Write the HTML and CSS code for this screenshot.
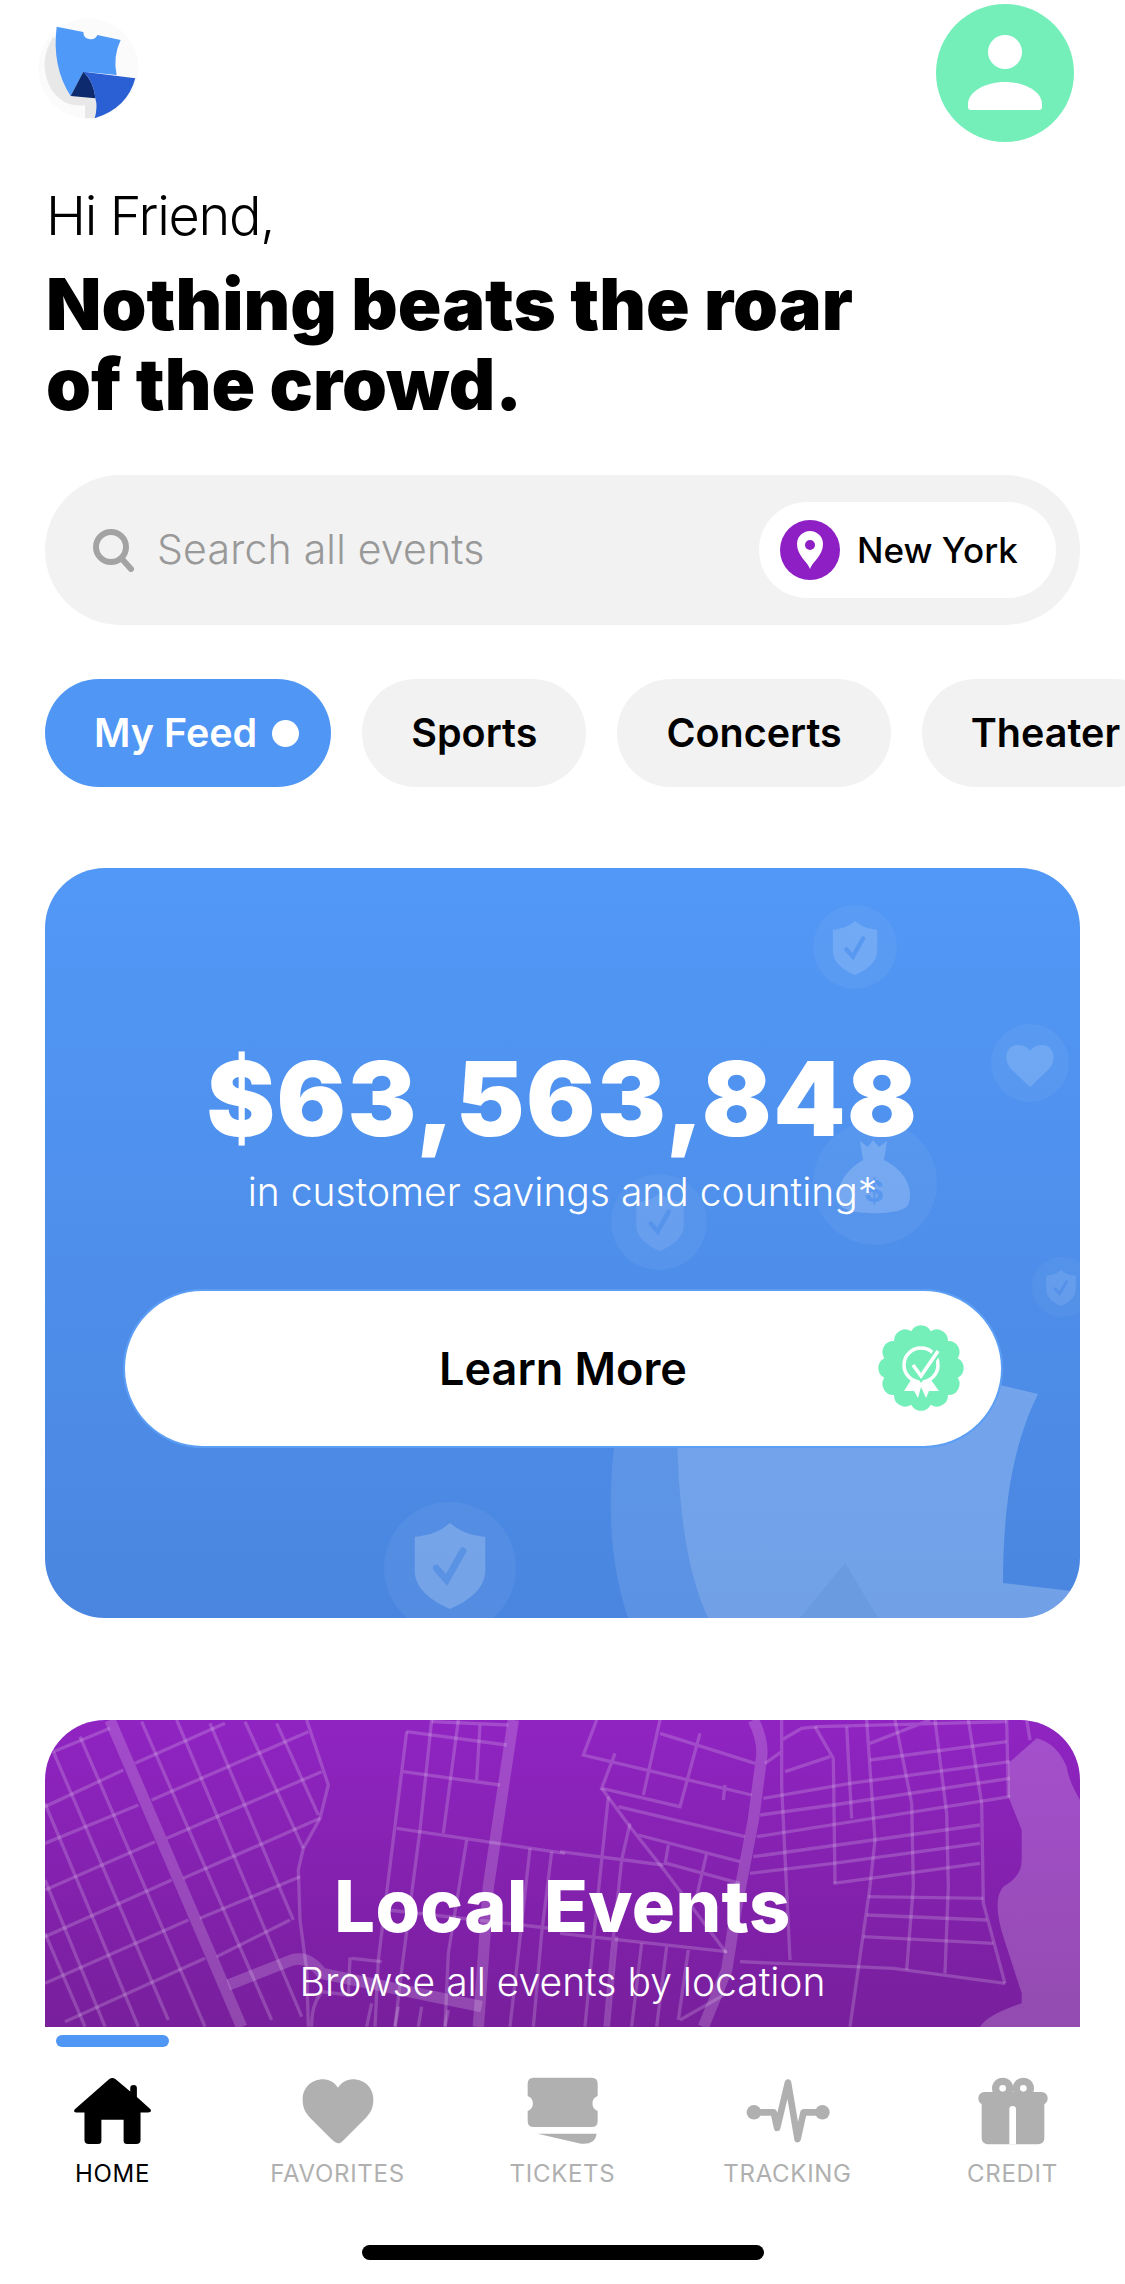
FILE: index.html
```html
<!DOCTYPE html>
<html lang="en">
  <head>
    <meta charset="UTF-8" />
    <meta name="viewport" content="width=device-width, initial-scale=1.0" />
    <title>Home</title>
    <link rel="stylesheet" href="styles.css">
  </head>
  <body>
    <div class="app">
      <main class="main">
        <header class="top-bar">
          <svg class="logo" viewBox="0 0 390 360">
            <circle cx="205" cy="175" r="150" fill="#fbfbfb" />
            <path d="M100,80 Q50,160 95,240 Q135,295 195,285 L195,325 L225,325 L240,240 Z" fill="#e8e8e8" />
            <path d="M110,50 L190,66 A22,22 0 0 0 232,75 L302,90 Q278,140 290,195 L190,185 L152,258 Q95,170 110,50 Z" fill="#4f9af8" />
            <path d="M190,185 L152,258 L226,265 Q222,215 190,185 Z" fill="#0d2a6e" />
            <path d="M190,185 L346,205 Q322,295 224,325 Q234,290 226,265 Q222,215 190,185 Z" fill="#2a60d4" />
          </svg>
          <svg class="avatar" viewBox="936 4 138 138">
            <circle cx="1005" cy="73" r="69" fill="#74efb9" />
            <circle cx="1005" cy="52" r="17" fill="#fff" />
            <path d="M968,104 C968,92 985,82 1005,82 C1025,82 1042,92 1042,104 V107 Q1042,110 1039,110 H971 Q968,110 968,107 Z" fill="#fff" />
          </svg>
        </header>

        <p class="greeting">Hi Friend,</p>
        <h1 class="headline">Nothing beats the roar<br>of the crowd.</h1>

        <div class="search">
          <svg class="search-icon" viewBox="0 0 42 44">
            <circle cx="18" cy="19" r="15" fill="none" stroke="#a3a3a3" stroke-width="6" />
            <path d="M29,31 L38,41" stroke="#a3a3a3" stroke-width="6" stroke-linecap="round" />
          </svg>
          <span class="search-text">Search all events</span>
          <div class="location">
            <svg class="pin" viewBox="0 0 60 60">
              <circle cx="30" cy="30" r="30" fill="#8e1fc4" />
              <path d="M30,49 C28,42 17,36 17,24 A13,13 0 0 1 43,24 C43,36 32,42 30,49 Z" fill="#fff" />
              <circle cx="30" cy="25" r="5" fill="#8e1fc4" />
            </svg>
            <span class="location-name">New York</span>
          </div>
        </div>

        <nav class="chips">
          <div class="chip chip-active">My Feed<span class="chip-dot"></span></div>
          <div class="chip">Sports</div>
          <div class="chip">Concerts</div>
          <div class="chip">Theater</div>
        </nav>

        <section class="card savings">
          <svg class="art" viewBox="45 868 1035 750">
            <defs>
              <path id="shield" d="M0,-1 C.3,-.74 .6,-.7 .82,-.68 L.82,.1 C.82,.55 .38,.84 0,1 C-.38,.84 -.82,.55 -.82,.1 L-.82,-.68 C-.6,-.7 -.3,-.74 0,-1 Z" />
              <path id="tick" d="M-.32,.05 L-.08,.32 L.3,-.35" fill="none" stroke-linecap="round" />
            </defs>
            <path d="M625,1380 Q595,1520 628,1618 L708,1618 Q672,1540 678,1380 Z" fill="#fff" opacity=".1" />
            <path d="M678,1380 Q672,1540 708,1618 L1080,1618 L1080,1592 L1003,1583 C1003,1500 1015,1440 1038,1394 L996,1384 Z" fill="#fff" opacity=".22" />
            <path d="M845,1563 L800,1618 L878,1618 Z" fill="#6a9be0" />

            <circle cx="855" cy="947" r="42" fill="#fff" opacity=".05" />
            <use href="#shield" transform="translate(855 948) scale(27)" fill="#fff" opacity=".15" />
            <use href="#tick" transform="translate(855 948) scale(27)" stroke="#4f92ef" stroke-width=".16" opacity=".7" />

            <circle cx="1030" cy="1063" r="39" fill="#fff" opacity=".05" />
            <path d="M1030,1087 L1012,1070 C1002,1060 1006,1045 1018,1045 C1024,1045 1028,1048 1030,1051 C1032,1048 1036,1045 1042,1045 C1054,1045 1058,1060 1048,1070 Z" fill="#fff" opacity=".15" />

            <circle cx="875" cy="1183" r="62" fill="#fff" opacity=".05" />
            <path d="M860,1141 L868,1147 L873,1140 L879,1147 L887,1141 L884,1160 C905,1170 915,1190 908,1205 C903,1216 845,1216 840,1205 C833,1190 845,1170 863,1160 Z" fill="#fff" opacity=".18" />
            <text class="bag-sign" x="874" y="1202">$</text>

            <circle cx="659" cy="1222" r="48" fill="#fff" opacity=".05" />
            <use href="#shield" transform="translate(660 1222) scale(29)" fill="#fff" opacity=".1" />
            <use href="#tick" transform="translate(660 1222) scale(29)" stroke="#4f8fea" stroke-width=".16" opacity=".7" />

            <circle cx="1062" cy="1287" r="30" fill="#fff" opacity=".04" />
            <use href="#shield" transform="translate(1061 1288) scale(18)" fill="#fff" opacity=".1" />
            <use href="#tick" transform="translate(1061 1288) scale(18)" stroke="#4d8ce8" stroke-width=".16" opacity=".7" />

            <circle cx="450" cy="1568" r="66" fill="#fff" opacity=".05" />
            <use href="#shield" transform="translate(450 1566) scale(43)" fill="#fff" opacity=".2" />
            <use href="#tick" transform="translate(450 1566) scale(43)" stroke="#5a92e4" stroke-width=".16" />
          </svg>

          <div class="amount">$63,563,848</div>
          <p class="savings-text">in customer savings and counting*</p>
          <button class="learn-more">
            Learn More
            <svg class="badge" viewBox="-44 -44 88 88">
              <path d="M36.7,9.8 A11,11 0 0 1 26.9,26.9 A11,11 0 0 1 9.8,36.7 A11,11 0 0 1 -9.8,36.7 A11,11 0 0 1 -26.9,26.9 A11,11 0 0 1 -36.7,9.8 A11,11 0 0 1 -36.7,-9.8 A11,11 0 0 1 -26.9,-26.9 A11,11 0 0 1 -9.8,-36.7 A11,11 0 0 1 9.8,-36.7 A11,11 0 0 1 26.9,-26.9 A11,11 0 0 1 36.7,-9.8 A11,11 0 0 1 36.7,9.8 Z" fill="#74efb9" />
              <path d="M-10,12 L-17,23 L-7,23 L-3,30 L0,19 L5,30 L8,23 L18,23 L10,12 Z" fill="#fff" />
              <circle cx="0" cy="-3" r="17" fill="#74efb9" stroke="#fff" stroke-width="3.5" />
              <path d="M-8,-3 L0,8 L17,-17" fill="none" stroke="#74efb9" stroke-width="8" />
              <path d="M-8,-3 L0,8 L17,-17" fill="none" stroke="#fff" stroke-width="3.5" />
            </svg>
          </button>
        </section>

        <section class="card local">
          <svg class="art" viewBox="0 0 3105 921">
            <g class="roads">
              <!-- west grid -->
              <path d="M25,95 L195,25 M0,260 L235,150 M0,370 L280,255 M0,510 L330,365 M0,650 L380,480 M0,790 L430,600 M60,905 L480,715" />
              <path d="M270,130 L540,10 M320,240 L790,35 M365,355 L830,155 M415,475 L825,295 M465,595 L765,470 M515,710 L735,600" />
              <path d="M25,95 L370,900 M105,50 L480,920 M0,250 L280,920 M0,480 L180,920 M0,640 L120,920" />
              <path d="M290,5 L680,900 M395,0 L770,890 M495,10 L745,600 M600,5 L775,385 M695,10 L820,285" />
              <path d="M785,0 L850,195 L825,295 L775,385 L760,450 L765,600 L785,750 L790,920" />
              <!-- middle blocks -->
              <path d="M1085,35 L1385,75 M1075,155 L1365,195 M1055,325 L1560,400 M1160,5 L1390,15" />
              <path d="M1085,35 L1000,720 L990,920 M1160,0 L1125,330 L1070,750 L1050,920 M1240,0 L1195,340 M1305,15 L1295,180 M1265,360 L1210,700 L1200,920" />
              <path d="M1455,385 L1420,700 L1395,920 M1520,395 L1490,640 L1465,920 M1030,570 L1560,630" />
              <path d="M920,715 L1010,725 M915,712 L910,825 M830,815 L910,825 M830,815 C805,850 800,880 800,920 M980,850 L965,920 M1130,860 L1120,920 M1060,860 L1050,920 M1210,870 L1200,920" />
              <g transform="translate(1545 0)">
                <path d="M110,0 L70,105 L575,225 M300,40 L585,130 M165,100 L125,205 L360,260 L420,40 M300,0 L250,225 M495,195 L490,240" />
                <path d="M125,205 L210,320 L320,460 L500,700 M175,260 L555,350 M235,345 L540,425 M320,430 L540,490 M325,375 L315,435 M440,400 L410,530" />
                <path d="M145,230 L100,660 L75,920 M210,310 L185,420 L155,700 L135,920 M0,395 L310,435 M0,640 L500,695" />
                <path d="M360,900 L500,820 M320,680 L290,920 M245,670 L215,920 M170,650 L145,920 M385,690 L355,900" />
                <!-- east grid -->
                <path d="M615,130 L665,95 M665,60 L725,25 L775,20 L1340,5 M665,0 L665,200 L690,720 M675,155 L810,110 M930,70 L1110,0 M930,120 L1340,65" />
                <path d="M610,235 L870,190 L1350,125 M600,285 L820,255 L1350,175 M590,350 L1350,230 M580,410 L940,360 L1260,315 M570,460 L820,430 L1260,370 M820,490 L1260,430" />
                <path d="M765,20 L820,115 L825,490 M860,20 L875,295 M920,0 L945,360 L930,500 L870,920 M1005,0 L1055,250 L1060,500 L1040,750 M1125,0 L1160,280 L1165,500 L1155,760 M1225,0 L1265,250 L1270,550 L1335,790 M1340,0 L1345,230 M1400,0 L1410,60" />
                <path d="M925,530 L1270,535 M920,585 L1280,600 M910,650 L1300,670 M540,725 L1000,745 L1335,790" />
              </g>
            </g>
            <g class="roads roads-wide">
              <path d="M195,0 L590,921" />
              <path d="M1405,0 L1330,500 L1300,921" />
              <path d="M550,795 L740,720 Q790,705 830,760 L1310,860" />
              <path transform="translate(1545 0)" d="M580,0 Q610,60 605,110 L580,300 L530,560 L500,750 L430,921" />
            </g>
            <path transform="translate(1545 0)" d="M1345,130 L1430,55 Q1490,70 1520,140 Q1525,180 1560,240 L1560,921 L1260,921 Q1280,885 1385,850 L1385,820 L1330,650 Q1295,540 1330,500 Q1385,470 1385,420 L1385,330 L1345,230 Z" fill="#fff" opacity=".2" />
          </svg>
          <h2 class="local-title">Local Events</h2>
          <p class="local-text">Browse all events by location</p>
        </section>
      </main>

      <footer class="tab-bar">
        <div class="tab-marker"></div>
        <div class="tabs">
          <div class="tab tab-active">
            <div class="tab-icon">
              <svg width="80" height="68" viewBox="100 48 240 205">
                <path fill="#000" d="M208,55 Q218,47 228,55 L272,92 V82 Q272,72 282,72 Q292,72 292,82 V108 L333,145 Q338,155 325,155 H303 V238 Q303,250 290,250 H262 Q252,250 252,240 V177 H185 V240 Q185,250 175,250 H147 Q134,250 134,238 V155 H112 Q98,155 105,145 Z" />
              </svg>
            </div>
            <span class="tab-label">HOME</span>
          </div>
          <div class="tab">
            <div class="tab-icon">
              <svg width="72" height="65" viewBox="786 59 216 195">
                <path fill="#b0b0b0" d="M894,252 Q885,250 870,235 L810,175 C790,155 788,135 788,120 C788,85 815,60 850,60 C870,60 885,72 894,85 C903,72 918,60 938,60 C973,60 1000,85 1000,120 C1000,135 998,155 978,175 L918,235 C903,250 900,252 894,252 Z" />
              </svg>
            </div>
            <span class="tab-label">FAVORITES</span>
          </div>
          <div class="tab">
            <div class="tab-icon">
              <svg width="72" height="68" viewBox="1463 58 216 204">
                <path fill="#b0b0b0" d="M1483,60 H1657 Q1675,60 1675,78 V115 A24,24 0 0 0 1675,160 V190 Q1675,208 1657,208 H1483 Q1465,208 1465,190 V160 A24,24 0 0 0 1465,115 V78 Q1465,60 1483,60 Z" />
                <path fill="#b0b0b0" d="M1495,228 H1672 Q1668,262 1625,258 Z" />
              </svg>
            </div>
            <span class="tab-label">TICKETS</span>
          </div>
          <div class="tab">
            <div class="tab-icon">
              <svg width="84" height="66" viewBox="556 52 254 198">
                <path fill="none" stroke="#b0b0b0" stroke-width="20" stroke-linecap="round" stroke-linejoin="round" d="M580,155 H640 L650,202 L683,65 L712,236 L730,155 H785" />
                <circle cx="580" cy="155" r="22" fill="#b0b0b0" />
                <circle cx="787" cy="155" r="22" fill="#b0b0b0" />
              </svg>
            </div>
            <span class="tab-label">TRACKING</span>
          </div>
          <div class="tab">
            <div class="tab-icon">
              <svg width="70" height="68" viewBox="1254 48 210 204">
                <circle cx="1328" cy="82" r="32" fill="#b0b0b0" />
                <circle cx="1390" cy="82" r="32" fill="#b0b0b0" />
                <circle cx="1328" cy="82" r="10" fill="#fff" />
                <circle cx="1390" cy="82" r="10" fill="#fff" />
                <rect x="1255" y="93" width="208" height="38" rx="18" fill="#b0b0b0" />
                <rect x="1265" y="115" width="188" height="135" rx="18" fill="#b0b0b0" />
                <path d="M1348,250 V145 A10,10 0 0 1 1368,145 V250 Z" fill="#fff" />
              </svg>
            </div>
            <span class="tab-label">CREDIT</span>
          </div>
        </div>
        <div class="home-bar"></div>
      </footer>
    </div>
  </body>
</html>
```

FILE: styles.css
```css
* {
  box-sizing: border-box;
}

body {
  margin: 0;
  background: #fff;
  font-family: Inter, "Liberation Sans", sans-serif;
  color: #000;
}

.app {
  width: 1125px;
  height: 2284px;
  display: flex;
  flex-direction: column;
  overflow: hidden;
}

.main {
  height: 2027px;
  overflow: hidden;
}

/* Header */
.top-bar {
  display: flex;
  justify-content: space-between;
  align-items: flex-start;
  height: 142px;
  padding: 4px 51px 0 20px;
}

.logo {
  width: 130px;
  height: 120px;
  margin-top: 6px;
}

.avatar {
  width: 138px;
  height: 138px;
}

.greeting {
  margin: 44px 0 0 46px;
  font-size: 54px;
  line-height: 60px;
  font-weight: 300;
  letter-spacing: -1.3px;
}

.headline {
  margin: 18px 0 0 46px;
  font-size: 72px;
  line-height: 80px;
  font-weight: 900;
}

/* Search */
.search {
  display: flex;
  align-items: center;
  height: 150px;
  margin: 51px 45px 0;
  padding: 0 24px 0 48px;
  border-radius: 75px;
  background: #f2f2f2;
}

.search-icon {
  width: 42px;
  height: 44px;
}

.search-text {
  flex: 1;
  margin: 0 0 2px 22px;
  font-size: 41px;
  font-weight: 300;
  letter-spacing: .2px;
  color: #999;
}

.location {
  display: flex;
  align-items: center;
  gap: 17px;
  width: 297px;
  height: 96px;
  padding-left: 21px;
  border-radius: 48px;
  background: #fff;
}

.pin {
  width: 60px;
  height: 60px;
}

.location-name {
  font-size: 35px;
  font-weight: 500;
}

/* Category chips */
.chips {
  display: flex;
  gap: 31px;
  margin: 54px 0 0 45px;
}

.chip {
  display: flex;
  flex-shrink: 0;
  align-items: center;
  height: 108px;
  padding: 0 49px;
  border-radius: 54px;
  background: #f2f2f2;
  font-size: 39.5px;
  font-weight: 600;
  white-space: nowrap;
}

.chip-active {
  padding: 0 32px 0 49px;
  background: #5097f5;
  color: #fff;
}

.chip-dot {
  width: 27px;
  height: 27px;
  margin-left: 15px;
  border-radius: 50%;
  background: #fff;
}

/* Promo cards */
.card {
  position: relative;
  margin: 0 45px;
  overflow: hidden;
  color: #fff;
  text-align: center;
}

.art {
  position: absolute;
  top: 0;
  left: 0;
  width: 1035px;
}

.savings {
  height: 750px;
  margin-top: 81px;
  padding-top: 176px;
  border-radius: 60px;
  background: linear-gradient(#5298f6, #4a86e0);
}

.savings .art {
  height: 750px;
}

.bag-sign {
  font-size: 30px;
  font-weight: 700;
  text-anchor: middle;
  fill: #5a97ee;
}

.amount {
  position: relative;
  font-size: 103px;
  line-height: 110px;
  font-weight: 900;
  letter-spacing: 1.5px;
}

.savings-text {
  position: relative;
  margin: 15px 0 0;
  font-size: 39px;
  line-height: 46px;
  font-weight: 300;
}

.learn-more {
  position: relative;
  display: block;
  width: 880px;
  height: 159px;
  margin: 74px 0 0 78px;
  border: 2px solid #5d9ef5;
  border-radius: 80px;
  background: #fff;
  font-family: inherit;
  font-size: 45px;
  font-weight: 600;
  color: #000;
}

.badge {
  position: absolute;
  top: 33px;
  right: 36px;
  width: 88px;
  height: 88px;
}

.local {
  height: 307px;
  margin-top: 102px;
  padding-top: 146px;
  border-radius: 60px 60px 0 0;
  background: linear-gradient(#9024c2, #781f9c);
}

.local .art {
  height: 307px;
}

.roads {
  fill: none;
  stroke: #fff;
  stroke-opacity: .18;
  stroke-width: 10;
}

.roads-wide {
  stroke-width: 34;
}

.local-title {
  position: relative;
  margin: 0;
  font-size: 72px;
  line-height: 80px;
  font-weight: 800;
  letter-spacing: .4px;
}

.local-text {
  position: relative;
  margin: 13px 0 0;
  font-size: 39px;
  line-height: 46px;
  font-weight: 300;
}

/* Tab bar */
.tab-bar {
  flex: 1;
  background: #fff;
}

.tab-marker {
  width: 113px;
  height: 12px;
  margin: 8px 0 0 56px;
  border-radius: 6px;
  background: #5097f5;
}

.tabs {
  display: grid;
  grid-template-columns: repeat(5, 225px);
  margin-top: 29px;
}

.tab {
  display: flex;
  flex-direction: column;
  align-items: center;
  color: #b0b0b0;
}

.tab-active {
  color: #000;
}

.tab-icon {
  display: flex;
  align-items: center;
  height: 70px;
}

.tab-label {
  margin-top: 14px;
  font-size: 24px;
  line-height: 28px;
  letter-spacing: .7px;
}

.home-bar {
  width: 402px;
  height: 15px;
  margin: 57px auto 0;
  border-radius: 8px;
  background: #000;
}
```
